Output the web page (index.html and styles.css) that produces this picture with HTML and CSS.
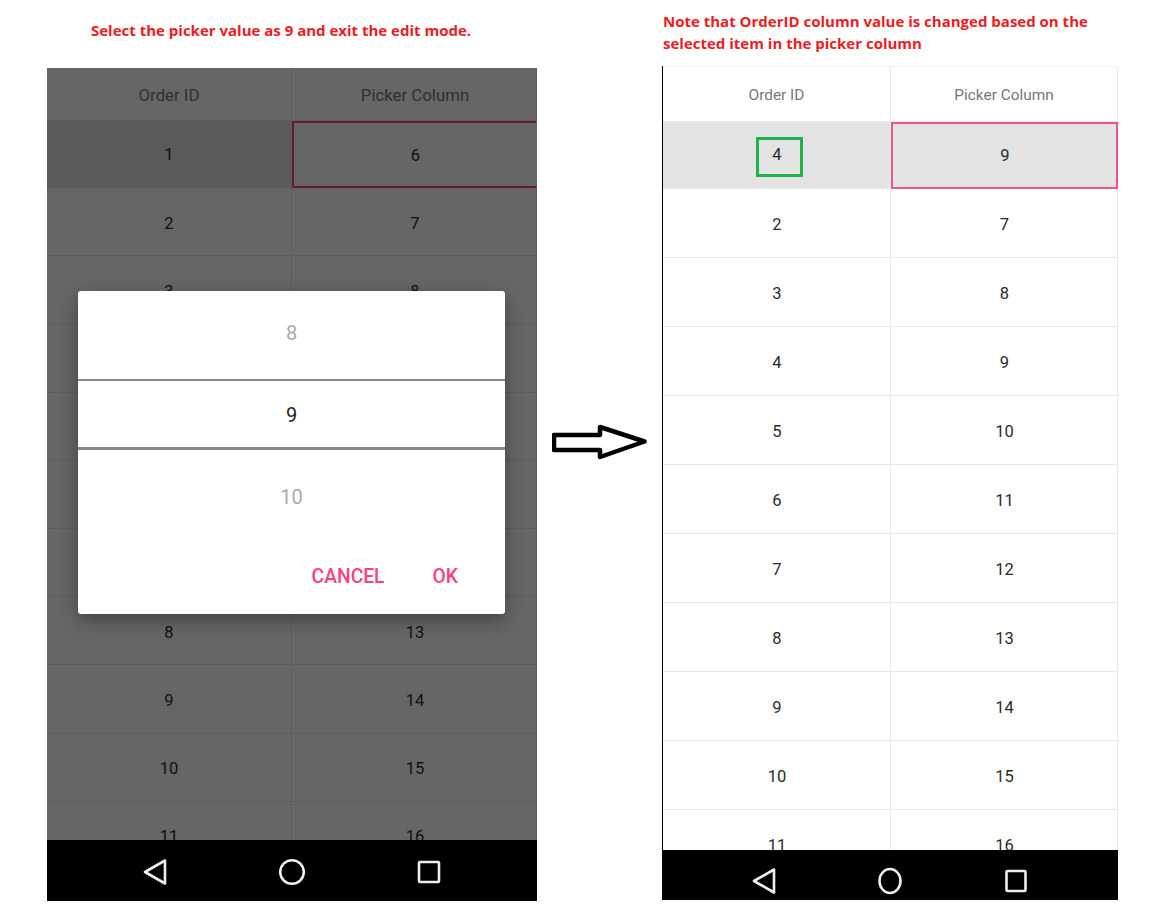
FILE: index.html
```html
<!DOCTYPE html>
<html lang="en">
<head>
    <meta charset="UTF-8">
    <title>Picker Column</title>
    <link rel="stylesheet" href="styles.css">
</head>
<body>
    <div class="page">
        <!-- Left screenshot: picker dialog open -->
        <section class="col col-left">
            <p class="note">Select the picker value as 9 and exit the edit mode.</p>
            <div class="phone">
                <div class="grid">
                    <div class="head">Order ID</div><div class="head">Picker Column</div>
                    <div class="cell selected">1</div><div class="cell selected-next editing">6</div>
                    <div class="cell">2</div><div class="cell">7</div>
                    <div class="cell">3</div><div class="cell">8</div>
                    <div class="cell">4</div><div class="cell">9</div>
                    <div class="cell">5</div><div class="cell">10</div>
                    <div class="cell">6</div><div class="cell">11</div>
                    <div class="cell">7</div><div class="cell">12</div>
                    <div class="cell">8</div><div class="cell">13</div>
                    <div class="cell">9</div><div class="cell">14</div>
                    <div class="cell">10</div><div class="cell">15</div>
                    <div class="cell">11</div><div class="cell">16</div>
                </div>
                <div class="navbar">
                    <svg class="nav-icon" viewBox="0 0 26 28"><path d="M23 2.5 L3 14 L23 25.5 Z"/></svg>
                    <svg class="nav-icon" viewBox="0 0 26 28"><circle cx="13" cy="14" r="11.8"/></svg>
                    <svg class="nav-icon" viewBox="0 0 26 28"><rect x="3" y="4" width="20" height="20" rx="1"/></svg>
                </div>
                <div class="scrim"></div>
                <div class="dialog">
                    <div class="pick pick-top">8</div>
                    <div class="pick pick-current">9</div>
                    <div class="pick pick-bottom">10</div>
                    <div class="actions">
                        <span>CANCEL</span>
                        <span>OK</span>
                    </div>
                </div>
            </div>
        </section>

        <svg class="arrow" viewBox="0 0 95 36">
            <path d="M2 11 H48 V3 L92.5 17.5 L48 33 V26 H2 Z"/>
        </svg>

        <!-- Right screenshot: after the edit -->
        <section class="col col-right">
            <p class="note">Note that OrderID column value is changed based on the selected item in the picker column</p>
            <div class="phone">
                <div class="grid">
                    <div class="head">Order ID</div><div class="head">Picker Column</div>
                    <div class="cell selected"><span class="mark">4</span></div><div class="cell selected editing">9</div>
                    <div class="cell">2</div><div class="cell">7</div>
                    <div class="cell">3</div><div class="cell">8</div>
                    <div class="cell">4</div><div class="cell">9</div>
                    <div class="cell">5</div><div class="cell">10</div>
                    <div class="cell">6</div><div class="cell">11</div>
                    <div class="cell">7</div><div class="cell">12</div>
                    <div class="cell">8</div><div class="cell">13</div>
                    <div class="cell">9</div><div class="cell">14</div>
                    <div class="cell">10</div><div class="cell">15</div>
                    <div class="cell">11</div><div class="cell">16</div>
                </div>
                <div class="navbar">
                    <svg class="nav-icon" viewBox="0 0 26 28"><path d="M23 2.5 L3 14 L23 25.5 Z"/></svg>
                    <svg class="nav-icon" viewBox="0 0 26 28"><ellipse cx="13" cy="14" rx="10.5" ry="12"/></svg>
                    <svg class="nav-icon" viewBox="0 0 26 28"><rect x="3.5" y="4" width="19" height="20" rx="1"/></svg>
                </div>
            </div>
        </section>
    </div>
</body>
</html>
```

FILE: styles.css
```css
/* Basic Reset */
body, p {
    margin: 0;
    padding: 0;
}

body {
    background-color: #fff;
    font-family: Roboto, sans-serif;
    color: #222;
}

.page {
    display: flex;
    align-items: flex-start;
    padding-left: 47px;
}

.col {
    display: flex;
    flex-direction: column;
    flex: none;
}

.col-left {
    width: 490px;
}

.col-right {
    width: 456px;
    margin-left: 15px;
}

/* Red captions */
.note {
    font-family: "Open Sans", sans-serif;
    font-weight: 700;
    font-size: 15px;
    line-height: 22px;
    color: #ed1c24;
}

.col-left .note {
    height: 68px;
    box-sizing: border-box;
    padding: 19px 0 0 44px;
}

.col-right .note {
    height: 66px;
    box-sizing: border-box;
    padding: 10px 0 0 1px;
}

/* Phone frame */
.phone {
    position: relative;
    display: flex;
    flex-direction: column;
    overflow: hidden;
}

.col-left .phone {
    height: 833px;
}

.col-right .phone {
    height: 834px;
    border-left: 1px solid #000;
    box-sizing: border-box;
}

/* Data grid */
.grid {
    flex: 1;
    min-height: 0;
    overflow: hidden;
    display: grid;
    align-content: start;
}

.col-left .grid {
    grid-template-columns: 245px 245px;
    grid-template-rows: 53px 67px;
    grid-auto-rows: 68.2px;
}

.col-right .grid {
    grid-template-columns: 228px 227px;
    grid-template-rows: 55px 66.5px;
    grid-auto-rows: 69px;
    border-top: 1px solid #f0f3f3;
}

.head, .cell {
    display: flex;
    align-items: center;
    justify-content: center;
    box-sizing: border-box;
    border-right: 1px solid #e8e8e8;
    border-bottom: 1px solid #e8e8e8;
}

.head {
    padding-top: 1px;
    color: #777;
}

.col-left .head {
    font-size: 16.8px;
}

.col-right .head {
    font-size: 15.4px;
}

.cell {
    padding-top: 3px;
    font-size: 16.5px;
    color: #2a2a2a;
}

.col-right .cell {
    padding-top: 4px;
    padding-left: 1px;
}

.col-left .head:nth-child(2), .col-left .cell:nth-child(even) {
    padding-left: 2px;
}

.selected {
    background-color: #e3e3e3;
}

.col-left .selected, .selected-next {
    padding-top: 1px;
}

.col-right .selected {
    padding-top: 0;
}

.editing {
    border: 2px solid #f0558a;
}

.col-left .editing {
    border-color: #ff4081;
    border-right-color: transparent;
}

.mark {
    width: 47px;
    height: 40px;
    box-sizing: border-box;
    margin: 4px 0 0 5px;
    padding: 0 5px 4px 0;
    border: 3px solid #22b14c;
    display: flex;
    align-items: center;
    justify-content: center;
}

/* Android nav bar */
.navbar {
    flex: none;
    position: relative;
    z-index: 1;
    box-sizing: border-box;
    display: flex;
    align-items: center;
    justify-content: center;
    background-color: #000;
}

.col-left .navbar {
    height: 61px;
    padding-top: 2px;
    gap: 111px;
}

.col-right .navbar {
    height: 50px;
    padding-top: 12px;
    gap: 100px;
    margin-left: -1px;
}

.nav-icon {
    flex: none;
    width: 26px;
    height: 28px;
    fill: none;
    stroke: #eee;
    stroke-width: 2.6;
    stroke-linejoin: round;
}

/* Arrow between the screenshots */
.arrow {
    flex: none;
    width: 95px;
    height: 36px;
    margin: 424px 0 0 15px;
    fill: #fff;
    stroke: #000;
    stroke-width: 4.5;
    stroke-linejoin: round;
}

/* Picker dialog */
.scrim {
    position: absolute;
    inset: 0;
    background-color: rgba(0, 0, 0, 0.6);
}

.dialog {
    position: absolute;
    left: 31px;
    top: 223px;
    width: 427px;
    height: 323px;
    background-color: #fff;
    border-radius: 3px;
    box-shadow: 0 6px 18px rgba(0, 0, 0, 0.35);
    display: flex;
    flex-direction: column;
    z-index: 2;
}

.pick {
    display: flex;
    align-items: center;
    justify-content: center;
    font-size: 20px;
    color: #aaa;
}

.pick-top {
    height: 84px;
    padding-bottom: 4px;
    border-bottom: 2px solid #888;
}

.pick-current {
    height: 64px;
    padding-top: 2px;
    color: #222;
    border-bottom: 3px solid #888;
}

.pick-bottom {
    height: 93px;
}

.actions {
    display: flex;
    justify-content: flex-end;
    gap: 48px;
    padding: 12px 47px 0 0;
    font-size: 19.3px;
    font-weight: 500;
    line-height: 44px;
    color: #ff4081;
}
```
